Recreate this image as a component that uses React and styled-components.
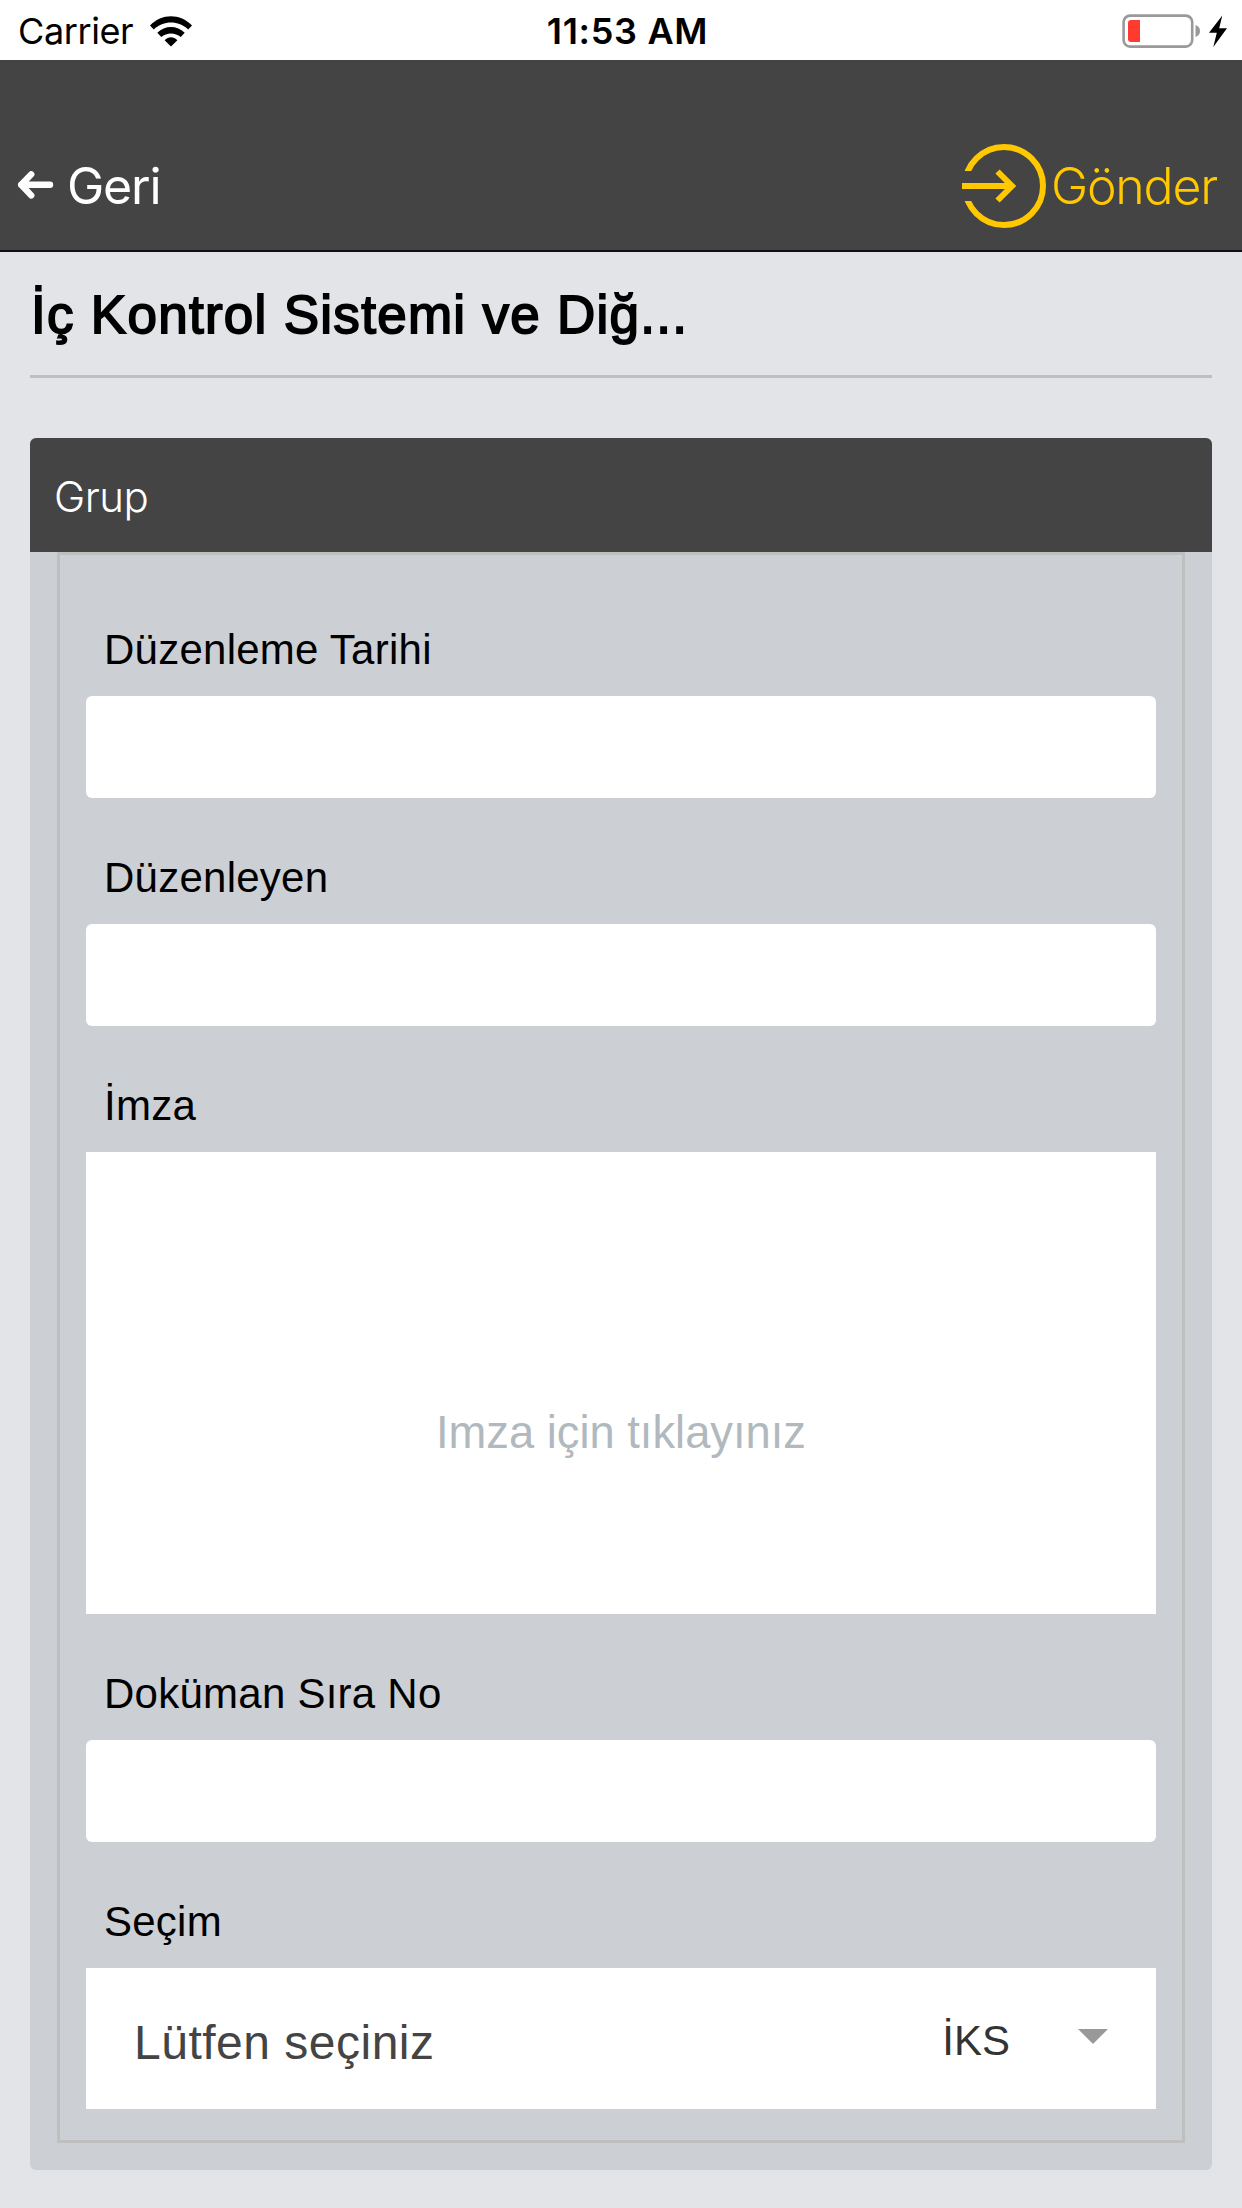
import React from "react";
import styled, { createGlobalStyle } from "styled-components";

const GlobalStyle = createGlobalStyle`
  :root {
    --dark: #444444;
    --accent: #ffc800;
    --page: #e2e4e8;
    --panel: #cccfd4;
    --line: #bfbfbf;
    --bodyFont: "Liberation Sans", Arial, sans-serif;
    --systemFont: Inter, Roboto, sans-serif;
  }

  * {
    box-sizing: border-box;
  }

  body {
    margin: 0;
    background-color: var(--page);
    font-family: var(--bodyFont);
  }
`;

const Screen = styled.div`
  width: 1242px;
  height: 2208px;
  overflow: hidden;
  background-color: var(--page);
`;

const StatusBar = styled.header`
  display: grid;
  grid-template-columns: 1fr auto 1fr;
  align-items: center;
  height: 60px;
  padding: 2px 15px 0 18px;
  background-color: white;
  font-family: var(--systemFont);
  font-size: 36px;
  line-height: 58px;
  color: black;

  svg {
    display: block;
  }
`;

const Carrier = styled.div`
  display: flex;
  align-items: center;
  gap: 17px;
  letter-spacing: -0.4px;
`;

const Clock = styled.div`
  padding-left: 10px;
  font-weight: 600;
  letter-spacing: 0.7px;
`;

const Power = styled.div`
  display: flex;
  align-items: center;
  justify-content: flex-end;
`;

const NavBar = styled.nav`
  display: flex;
  align-items: flex-start;
  justify-content: space-between;
  height: 192px;
  padding: 84px 25px 0 16px;
  border-bottom: solid 2px #111111;
  background-color: var(--dark);
`;

const NavButton = styled.button`
  display: flex;
  align-items: center;
  gap: ${(props) => props.$gap};
  height: 84px;
  padding: 0;
  border: none;
  background: none;
  font-family: var(--systemFont);
  font-weight: ${(props) => props.$weight};
  font-size: 50px;
  line-height: 86px;
  letter-spacing: -1.2px;
  color: ${(props) => props.$color};
`;

const Content = styled.main`
  padding: 0 30px;
`;

/* Medium weight: the regular face thickened by a thin outline */
const Title = styled.h1`
  height: 126px;
  margin: 0 0 60px;
  padding: 33px 0 0 1px;
  border-bottom: solid 3px var(--line);
  font-size: 53px;
  font-weight: 400;
  line-height: 60px;
  letter-spacing: 1.28px;
  color: black;
  -webkit-text-stroke: 1.8px black;
`;

const Group = styled.section`
  padding-bottom: 27px;
  border-radius: 6px;
  background-color: var(--panel);
`;

const GroupHeader = styled.h2`
  height: 114px;
  margin: 0;
  padding: 3px 24px 0;
  border-radius: 6px 6px 0 0;
  background-color: var(--dark);
  font-family: var(--systemFont);
  font-size: 42px;
  font-weight: 350;
  line-height: 111px;
  letter-spacing: -0.5px;
  color: white;
`;

const Fields = styled.div`
  margin: 0 27px;
  padding: 15px 26px 31px;
  border: solid 3px var(--line);
`;

const Label = styled.label`
  display: block;
  height: 126px;
  padding: 56px 0 0 18px;
  font-size: 42px;
  line-height: 48px;
  letter-spacing: 0.25px;
  color: black;
`;

const Input = styled.input`
  display: block;
  width: 100%;
  height: 102px;
  padding: 0 20px;
  border: none;
  border-radius: 6px;
  background-color: white;
  font-size: 42px;
`;

const SignatureBox = styled.div`
  height: 462px;
  padding-top: 254px;
  background-color: white;
  font-size: 45.3px;
  line-height: 54px;
  text-align: center;
  color: #b1b8be;
`;

const SelectBox = styled.div`
  display: flex;
  align-items: center;
  height: 141px;
  padding: 0 48px;
  background-color: white;
`;

const SelectHint = styled.span`
  flex: 1;
  padding-top: 7px;
  font-size: 48px;
  letter-spacing: 0.5px;
  color: var(--dark);
`;

const SelectValue = styled.span`
  margin-right: 68px;
  padding-top: 5px;
  font-size: 42px;
  color: #333333;
`;

const Caret = styled.span`
  margin-top: -4px;
  border: solid 15px transparent;
  border-top-color: #999999;
  border-bottom-width: 0;
`;

const WifiIcon = () => (
  <svg width="42" height="31" viewBox="0 0 42 31">
    <path d="M0 9.5C12 -2.8 30 -2.8 42 9.5L38.2 13.5C28.5 4.2 13.5 4.2 3.8 13.5Z" />
    <path d="M7.3 16.8C15 9 27 9 34.7 16.8L30.7 21C25.3 16.2 16.7 16.2 11.3 21Z" />
    <path d="M14.6 24.2C18.2 20.2 23.8 20.2 27.4 24.2L21 30.6Z" />
  </svg>
);

const BatteryIcon = () => (
  <svg width="105" height="34" viewBox="0 0 105 34">
    <rect
      x="1.6"
      y="1.6"
      width="68.6"
      height="31"
      rx="6.5"
      fill="none"
      stroke="#999999"
      strokeWidth="2.6"
    />
    <path d="M18 6H9Q6 6 6 9V25Q6 28 9 28H18Z" fill="#ff3b30" />
    <path d="M73.5 11Q78 12.5 78 17Q78 21.5 73.5 23Z" fill="#999999" />
    <path d="M100.3 1.5L87 18.8H94.8L91.3 33L105 14.2H97.2Z" />
  </svg>
);

const BackIcon = () => (
  <svg width="38" height="30" viewBox="0 0 38 30">
    <path
      d="M34 13.8H5.2M15.2 3.4L5.2 13.8L15.2 24.4"
      fill="none"
      stroke="currentColor"
      strokeWidth="6.4"
      strokeLinecap="round"
      strokeLinejoin="round"
    />
  </svg>
);

const SendIcon = () => (
  <svg width="84" height="84" viewBox="0 0 84 84">
    <defs>
      <clipPath id="ring-gap">
        <path d="M0 0H84V84H0V57H22V27H0Z" />
      </clipPath>
    </defs>
    <g fill="none" stroke="currentColor" strokeWidth="6">
      <circle cx="42" cy="42" r="39" clipPath="url(#ring-gap)" />
      <path d="M0 42H50M35.5 27.5L50 42L35.5 56.5" />
    </g>
  </svg>
);

const App = () => {
  return (
    <>
      <GlobalStyle />
      <Screen>
        <StatusBar>
          <Carrier>
            Carrier
            <WifiIcon />
          </Carrier>
          <Clock>11:53 AM</Clock>
          <Power>
            <BatteryIcon />
          </Power>
        </StatusBar>

        <NavBar>
          <NavButton $color="white" $weight={380} $gap="13px">
            <BackIcon />
            Geri
          </NavButton>
          <NavButton $color="var(--accent)" $weight={300} $gap="5px">
            <SendIcon />
            Gönder
          </NavButton>
        </NavBar>

        <Content>
          <Title>İç Kontrol Sistemi ve Diğ...</Title>

          <Group>
            <GroupHeader>Grup</GroupHeader>
            <Fields>
              <Label>Düzenleme Tarihi</Label>
              <Input />
              <Label>Düzenleyen</Label>
              <Input />
              <Label>İmza</Label>
              <SignatureBox>Imza için tıklayınız</SignatureBox>
              <Label>Doküman Sıra No</Label>
              <Input />
              <Label>Seçim</Label>
              <SelectBox>
                <SelectHint>Lütfen seçiniz</SelectHint>
                <SelectValue>İKS</SelectValue>
                <Caret />
              </SelectBox>
            </Fields>
          </Group>
        </Content>
      </Screen>
    </>
  );
};

export default App;
